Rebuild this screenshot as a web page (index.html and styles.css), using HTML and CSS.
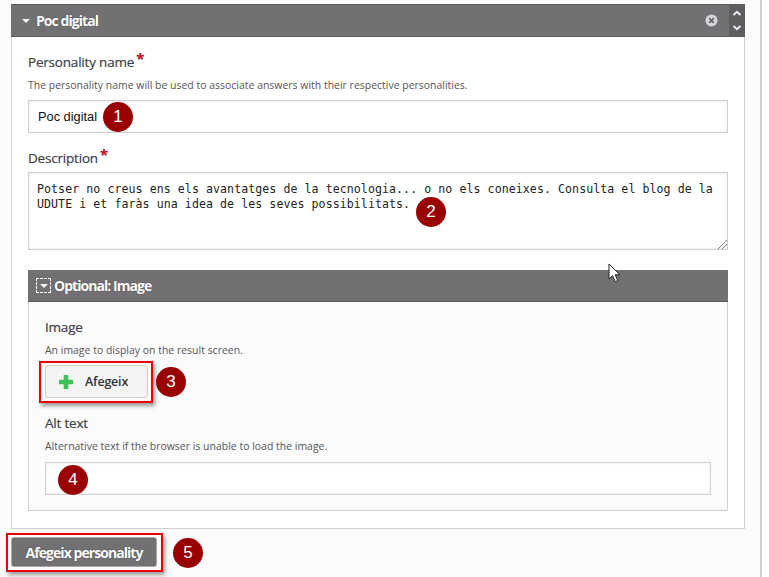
FILE: index.html
```html
<!DOCTYPE html>
<html lang="ca">
<head>
<meta charset="utf-8">
<title>Poc digital</title>
<link rel="stylesheet" href="styles.css">
</head>
<body>
<main class="page">
  <section class="panel">
    <header class="panel-head">
      <span class="caret"></span>
      <h2 class="panel-title">Poc digital</h2>
      <svg class="remove" width="13" height="13" viewBox="0 0 13 13"><circle cx="6.5" cy="6.5" r="6" fill="#d3d6da"/><path d="M4.2 4.2l4.6 4.6M8.8 4.2l-4.6 4.6" stroke="#66666a" stroke-width="1.8"/></svg>
      <div class="order">
        <svg width="10" height="7" viewBox="0 0 10 7"><path d="M1.5 5L5 1.8 8.5 5" fill="none" stroke="#e8eef4" stroke-width="2"/></svg>
        <svg width="10" height="7" viewBox="0 0 10 7"><path d="M1.5 2L5 5.2 8.5 2" fill="none" stroke="#e8eef4" stroke-width="2"/></svg>
      </div>
    </header>
    <div class="panel-body">
      <div class="field name-field">
        <label class="label">Personality name<span class="req">*</span></label>
        <p class="hint">The personality name will be used to associate answers with their respective personalities.</p>
        <div class="input name-input">Poc digital</div>
      </div>
      <div class="field desc-field">
        <label class="label">Description<span class="req">*</span></label>
        <div class="textarea">Potser no creus ens els avantatges de la tecnologia... o no els coneixes. Consulta el blog de la<br>UDUTE i et faràs una idea de les seves possibilitats.
          <svg class="grip" width="10" height="10" viewBox="0 0 10 10"><path d="M1 10L10 1M5 10l5-5" stroke="#777" stroke-width="1"/></svg>
        </div>
      </div>
      <section class="group">
        <header class="group-head">
          <span class="focus-box"><span class="caret small"></span></span>
          <h3 class="group-title">Optional: Image</h3>
        </header>
        <div class="group-body">
          <label class="label">Image</label>
          <p class="hint">An image to display on the result screen.</p>
          <div class="mark add-mark">
            <button class="add-btn" type="button">
              <svg width="14" height="14" viewBox="0 0 14 14"><path d="M7 0v14M0 7h14" stroke="#3fc15a" stroke-width="4.6"/></svg>
              <span>Afegeix</span>
            </button>
          </div>
          <label class="label alt-label">Alt text</label>
          <p class="hint">Alternative text if the browser is unable to load the image.</p>
          <div class="input alt-input"></div>
        </div>
      </section>
    </div>
  </section>
  <div class="mark submit-mark">
    <button class="submit-btn" type="button">Afegeix personality</button>
  </div>
</main>
<span class="num n1">1</span>
<span class="num n2">2</span>
<span class="num n3">3</span>
<span class="num n4">4</span>
<span class="num n5">5</span>
<svg class="cursor" width="14" height="21" viewBox="0 0 14 21"><path d="M1 1v15l3.6-3.3 2.6 6 2.6-1.1-2.6-5.8H12z" fill="#fff" stroke="#222" stroke-width="1"/></svg>
</body>
</html>
```

FILE: styles.css
```css
* { box-sizing: border-box; }
html, body { margin: 0; padding: 0; background: #fff; }
body { font-family: "Open Sans", sans-serif; color: #444; height: 577px; overflow: hidden; position: relative; }
h2, h3, p { margin: 0; }

.page {
  width: 762px;
  height: 577px;
  padding: 4px 16px 0 11px;
  background: #fbfbfb;
  border-right: 2px solid #cfcfcf;
}

.panel { width: 734px; height: 525px; background: #fff; border: 1px solid #cfcfcf; border-top: 0; }
.panel-head {
  display: flex;
  align-items: center;
  height: 33px;
  margin: 0 -1px;
  padding-left: 11px;
  background: #737073;
  border-top: 1px solid #5c5a5c;
  border-bottom: 1px solid #5c5a5c;
  color: #fff;
}
.caret { width: 0; height: 0; border-left: 4px solid transparent; border-right: 4px solid transparent; border-top: 4px solid #f4f4f4; }
.panel-title { flex: 1; margin-left: 6px; font-size: 14px; font-weight: 700; letter-spacing: -.95px; text-shadow: 0 0 1px #333; }
.remove { margin-right: 11px; }
.order { width: 16px; height: 31px; background: #5f5d60; display: flex; flex-direction: column; align-items: center; justify-content: center; gap: 7px; }

.panel-body { padding: 15px 16px 0; }
.field { display: block; }
.label { display: block; font-size: 13.5px; line-height: 20px; color: #3d4146; letter-spacing: -.2px; -webkit-text-stroke: .2px #3d4146; }
.req { display: inline-block; vertical-align: 3px; color: #e0001b; font-size: 15px; line-height: 12px; margin-left: 2px; font-weight: 700; }
.hint { font-size: 10.4px; line-height: 14px; margin-top: 6px; color: #555; letter-spacing: .035px; }
.input { background: #fff; border: 1px solid #d0d0d0; box-shadow: inset 0 0 3px #e6e6e6; }
.name-input { height: 33px; margin-top: 8px; padding-left: 9px; font: 12.8px/31px "Liberation Sans", sans-serif; color: #111; }
.desc-field { margin-top: 15px; }
.textarea {
  position: relative;
  height: 78px;
  margin-top: 4px;
  padding: 9px 8px 0;
  background: #fff;
  border: 1px solid #d0d0d0;
  box-shadow: inset 0 0 3px #e6e6e6;
  font: 11.58px/15px "DejaVu Sans Mono", monospace;
  letter-spacing: .07px;
  color: #222;
  white-space: nowrap;
}
.grip { position: absolute; right: 0; bottom: 0; }

.group { margin-top: 20px; height: 241px; background: #fbfbfb; border: 1px solid #cfcfcf; border-top: 0; }
.group-head { display: flex; align-items: center; height: 32px; margin: 0 -1px; padding-left: 8px; background: #737073; border-bottom: 1px solid #5c5a5c; color: #fff; }
.focus-box { display: flex; align-items: center; justify-content: center; width: 15px; height: 15px; border: 1px dashed #fff; }
.group-title { margin-left: 3px; font-size: 14px; font-weight: 700; letter-spacing: -.95px; text-shadow: 0 0 1px #333; }
.group-body { padding: 15px 16px 0; }

.mark { border: 2px solid #f00000; box-shadow: 2px 3px 4px #9a9a9a; display: block; }
.add-mark { width: 114px; height: 42px; margin: 4px 0 0 -6px; padding: 2px 0 0 4px; }
.add-btn {
  display: flex;
  align-items: center;
  gap: 12px;
  width: 103px;
  height: 33px;
  padding: 0 0 0 13px;
  background: #f4f4f4;
  border: 1px solid #cfcfcf;
  border-radius: 3px;
  font: 600 12.5px "Open Sans", sans-serif;
  letter-spacing: -.2px;
  color: #333;
}
.alt-label { margin-top: 10px; }
.alt-input { height: 33px; margin-top: 9px; }

.submit-mark { width: 157px; height: 39px; margin: 4px 0 0 -5px; padding: 2px 0 0 3px; }
.submit-btn {
  display: block;
  width: 146px;
  height: 30px;
  padding: 0;
  background: #737073;
  border: 1px solid #a9a7a9;
  border-radius: 3px;
  color: #fff;
  font: 700 14px "Open Sans", sans-serif;
  letter-spacing: -.95px;
  text-shadow: 0 0 1px #333;
}

.num {
  position: absolute;
  width: 30px;
  height: 30px;
  border-radius: 50%;
  background: #990000;
  color: #fff;
  font: 17px/30px "Liberation Sans", sans-serif;
  text-align: center;
}
.n1 { left: 103px; top: 102px; }
.n2 { left: 416px; top: 197px; }
.n3 { left: 156px; top: 367px; }
.n4 { left: 58px; top: 465px; }
.n5 { left: 173px; top: 538px; }
.cursor { position: absolute; left: 608px; top: 263px; }
```
